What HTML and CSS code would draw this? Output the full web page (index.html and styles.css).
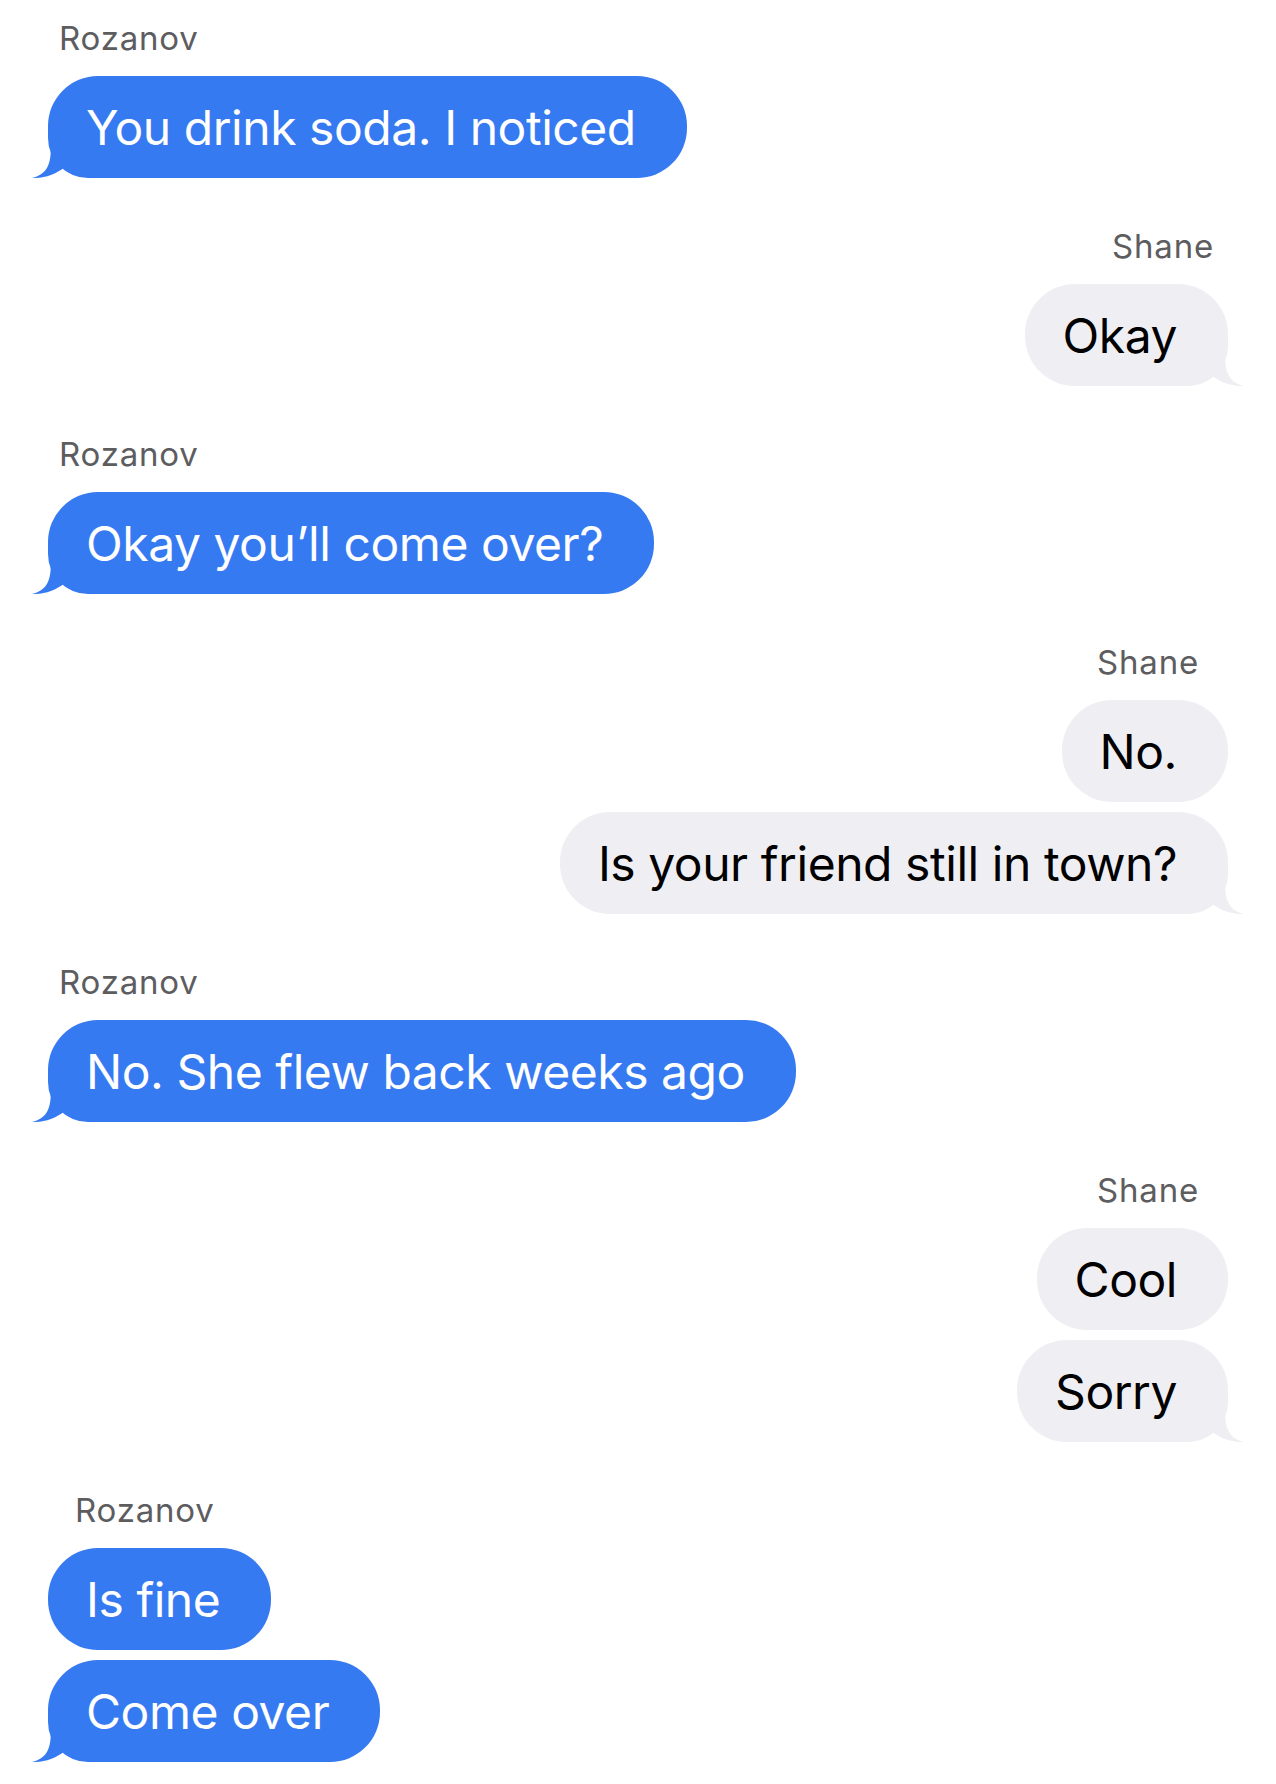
FILE: index.html
```html
<!DOCTYPE html>
<html lang="en">
<head>
    <meta charset="UTF-8">
    <meta name="viewport" content="width=device-width, initial-scale=1.0">
    <title>Messages</title>
    <link rel="stylesheet" href="styles.css">
</head>
<body>
    <svg class="defs" aria-hidden="true">
        <symbol id="tail-shape" viewBox="0 0 80 44">
            <path d="M20,2 L20,10 C20,30 17,40 1,44 C12,44.5 24,41 34,33 L60,20 L60,2 Z" fill="currentColor"/>
        </symbol>
    </svg>

    <main class="chat">
        <section class="group them">
            <div class="name">Rozanov</div>
            <div class="bubble has-tail">You drink soda. I noticed<svg class="tail"><use href="#tail-shape"/></svg></div>
        </section>

        <section class="group me">
            <div class="name">Shane</div>
            <div class="bubble has-tail">Okay<svg class="tail"><use href="#tail-shape"/></svg></div>
        </section>

        <section class="group them">
            <div class="name">Rozanov</div>
            <div class="bubble has-tail">Okay you’ll come over?<svg class="tail"><use href="#tail-shape"/></svg></div>
        </section>

        <section class="group me">
            <div class="name shifted">Shane</div>
            <div class="bubble">No.</div>
            <div class="bubble has-tail">Is your friend still in town?<svg class="tail"><use href="#tail-shape"/></svg></div>
        </section>

        <section class="group them">
            <div class="name">Rozanov</div>
            <div class="bubble has-tail">No. She flew back weeks ago<svg class="tail"><use href="#tail-shape"/></svg></div>
        </section>

        <section class="group me">
            <div class="name shifted">Shane</div>
            <div class="bubble">Cool</div>
            <div class="bubble has-tail">Sorry<svg class="tail"><use href="#tail-shape"/></svg></div>
        </section>

        <section class="group them">
            <div class="name shifted">Rozanov</div>
            <div class="bubble">Is fine</div>
            <div class="bubble has-tail">Come over<svg class="tail"><use href="#tail-shape"/></svg></div>
        </section>
    </main>
</body>
</html>
```

FILE: styles.css
```css
body {
    margin: 0;
    background: #fff;
    font-family: Inter, "Noto Sans", sans-serif;
}

.defs {
    position: absolute;
    width: 0;
    height: 0;
}

.chat {
    padding: 20px 48px 22px;
}

.group {
    display: flex;
    flex-direction: column;
    gap: 10px;
    margin-top: 50px;
}

.group:first-child {
    margin-top: 0;
}

.them {
    align-items: flex-start;
}

.me {
    align-items: flex-end;
}

.name {
    font-size: 33px;
    line-height: 36px;
    letter-spacing: 0.8px;
    color: #5d5d5f;
    margin-bottom: 10px;
}

.them .name {
    padding-left: 11px;
}

.me .name {
    padding-right: 14px;
}

.them .name.shifted {
    padding-left: 27px;
}

.me .name.shifted {
    padding-right: 29px;
}

.bubble {
    position: relative;
    z-index: 0;
    font-size: 48px;
    line-height: 58px;
    letter-spacing: -0.45px;
    padding: 23px 51px 21px 38px;
    border-radius: 50px;
    white-space: nowrap;
}

.them .bubble {
    background: #367af2;
    color: #fff;
}

.me .bubble {
    background: #efeff3;
    color: #000;
}

.tail {
    position: absolute;
    z-index: -1;
    bottom: 0;
    width: 80px;
    height: 44px;
}

.them .has-tail {
    border-bottom-left-radius: 40px;
}

.them .tail {
    left: -17px;
    color: #367af2;
}

.me .has-tail {
    border-bottom-right-radius: 40px;
}

.me .tail {
    right: -17px;
    color: #efeff3;
    transform: scaleX(-1);
}
```
